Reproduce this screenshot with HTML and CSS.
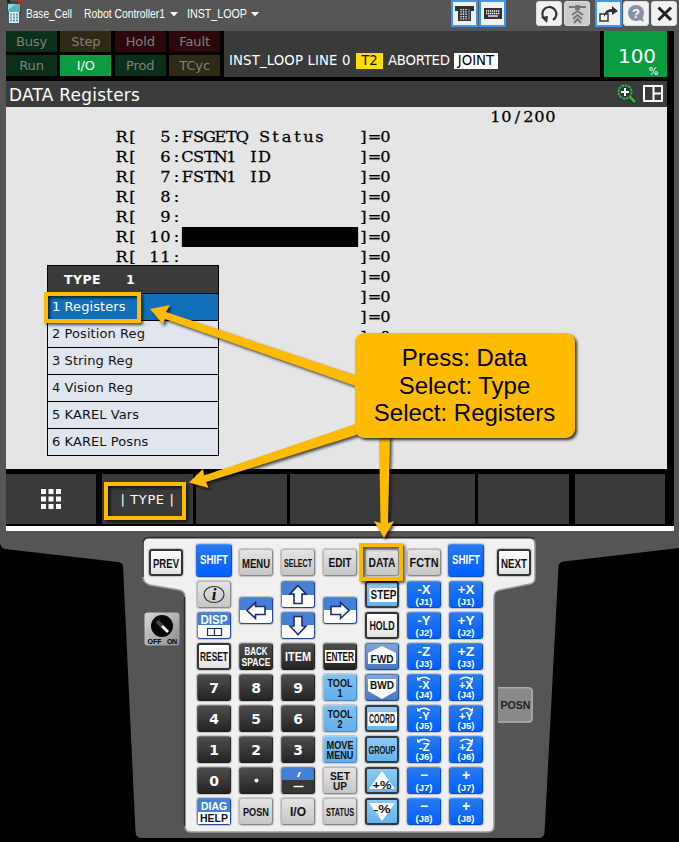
FILE: index.html
```html
<!DOCTYPE html>
<html lang="en">
<head>
<meta charset="utf-8">
<title>Base_Cell</title>
<link rel="stylesheet" href="styles.css">
</head>
<body>
<div class="pendant">
  <header class="titlebar">
    <svg class="pendant-icon" width="16" height="24" viewBox="0 0 16 24">
      <rect x="1" y="1" width="14" height="13" fill="#444"/><rect x="1" y="0" width="3" height="3" fill="#222"/><rect x="12" y="0" width="3" height="3" fill="#e02020"/>
      <rect x="2" y="4" width="12" height="8" fill="#5fb3b8"/><path d="M2 4h8l-8 6z" fill="#8fd6d8"/>
      <rect x="3" y="12" width="10" height="11" fill="#e8edf0"/>
      <path d="M4 14.500h8M4 17.500h8M4 20.500h8" stroke="#4c9fc4" stroke-width="2" stroke-dasharray="2 1"/>
    </svg>
    <svg class="crumbs" width="240" height="24">
      <text x="0" y="16" textLength="46" lengthAdjust="spacingAndGlyphs">Base_Cell</text>
      <text x="58" y="16" textLength="81" lengthAdjust="spacingAndGlyphs">Robot Controller1</text>
      <path d="M144 10h8l-4 4.500z"/>
      <text x="161" y="16" textLength="60" lengthAdjust="spacingAndGlyphs">INST_LOOP</text>
      <path d="M225 10h8l-4 4.500z"/>
    </svg>
    <div class="tools">
      <span class="tool on"><svg width="23" height="23" viewBox="0 0 23 23"><path d="M2 4h19v5h-3v10H5V9H2z" fill="#333"/><path d="M8 7v11M10.500 7v11M13 7v11" stroke="#fff" stroke-width="1.300" stroke-dasharray="1.300 1"/><path d="M16 7v11" stroke="#4a6a9c" stroke-width="2"/></svg></span>
      <span class="tool on"><svg width="23" height="23" viewBox="0 0 23 23"><rect x="3" y="6" width="18" height="11" fill="#333"/><path d="M5 9h14M5 11.500h14" stroke="#fff" stroke-width="1.300" stroke-dasharray="1.300 .7"/><path d="M7 14h10" stroke="#fff" stroke-width="1.300"/></svg></span>
      <span class="tool gap-refresh"><svg width="23" height="23" viewBox="0 0 23 23"><path d="M6 16.500A7 7 0 1 1 15 18" fill="none" stroke="#333" stroke-width="2.200"/><path d="M3 15l7-1-1 7z" fill="#333"/></svg></span>
      <span class="tool dim"><svg width="23" height="23" viewBox="0 0 23 23"><path d="M3 5h17" stroke="#777" stroke-width="2"/><rect x="9" y="3" width="5" height="5" rx="1" fill="#777"/><path d="M6 13l5.500-4 5.500 4M7 17l4.500-4 4.500 4M8 21l3.500-4 3.500 4" fill="none" stroke="#777" stroke-width="2"/></svg></span>
      <span class="tool on gap-open"><svg width="23" height="23" viewBox="0 0 23 23"><rect x="3" y="12" width="8" height="7" fill="#fff" stroke="#333" stroke-width="1.500"/><path d="M7 15c0-6 4-8 8-8V4l6 5-6 4v-3c-4 0-5 1-8 5z" fill="#333"/></svg></span>
      <span class="tool"><svg width="23" height="23" viewBox="0 0 23 23"><circle cx="11" cy="11" r="8" fill="#8791a3"/><path d="M13 17l6 3-2-7z" fill="#8791a3"/><text x="11" y="16" class="qmark">?</text></svg></span>
      <span class="tool"><svg width="23" height="23" viewBox="0 0 23 23"><path d="M5.500 5.500l12.500 12.500M18 5.500L5.500 18" stroke="#222" stroke-width="3"/></svg></span>
    </div>
  </header>

  <main class="screen">
    <section class="status">
      <div class="lamps">
        <span class="lamp green">Busy</span><span class="lamp olive">Step</span><span class="lamp red">Hold</span><span class="lamp red">Fault</span>
        <span class="lamp green">Run</span><span class="lamp lit">I/O</span><span class="lamp green">Prod</span><span class="lamp olive">TCyc</span>
      </div>
      <div class="state"><span class="prog">INST_LOOP LINE 0</span><span class="mode">T2</span><span class="aborted">ABORTED</span><span class="frame">JOINT</span></div>
      <div class="speed"><span class="pct">100</span><span class="unit">%</span></div>
    </section>
    <h1 class="heading"><span>DATA Registers</span>
      <svg width="50" height="24" viewBox="0 0 50 24"><path d="M14 14l5 5" stroke="#111" stroke-width="5"/><path d="M14 14l5 5" stroke="#28b345" stroke-width="3.200"/><circle cx="9" cy="9" r="6.500" fill="#333" stroke="#28b345" stroke-width="2" stroke-dasharray="2.500 .8"/><path d="M9 5v8M5 9h8" stroke="#fff" stroke-width="2"/><path d="M28 3h18v15H28zM37.500 3v15M37.500 10.500h8.500" fill="none" stroke="#fff" stroke-width="2"/></svg>
    </h1>
    <section class="registers" id="registers"></section>
    <ul class="type-menu">
      <li class="type-head"><span>TYPE</span><span>1</span></li>
      <li class="selected">1 Registers</li>
      <li>2 Position Reg</li>
      <li>3 String Reg</li>
      <li>4 Vision Reg</li>
      <li>5 KAREL Vars</li>
      <li>6 KAREL Posns</li>
    </ul>
    <nav class="softkeys">
      <span><svg width="20" height="20" viewBox="0 0 20 20"><path d="M0 2.500h20M0 10h20M0 17.500h20" stroke="#fff" stroke-width="5" stroke-dasharray="5 2.500"/></svg></span>
      <span class="type-key">| TYPE |</span><span></span><span></span><span></span><span></span><span></span>
    </nav>
  </main>

  <section class="keypad">
    <svg class="shell" width="679" height="311" viewBox="0 531 679 311">
      <defs>
        <linearGradient id="plate" x1="0" y1="0" x2="1" y2="1"><stop offset="0" stop-color="#d8d8d8"/><stop offset="1" stop-color="#8c8c8c"/></linearGradient>
      </defs>
      <path d="M0 531H679V548L564 561.500Q559 562 558.500 566L544.500 833Q544 838 538 838H142Q136 838 135.500 832L123 566Q122.500 562.500 118 562L5 549Q1 548 0 543Z" fill="#555"/>
      <path d="M149 538H529Q535 538 535 544V578Q535 583 530 584L500 590Q494 591 494 597V826Q494 832 488 832H191Q185 832 185 826V597Q185 591 179 590L150 585Q143 583 143 577V544Q143 538 149 538Z" fill="#f0f0f0" stroke="#999" stroke-width="1.500"/>
      <path d="M143 577V544Q143 537.500 149 537.500H529Q532 537.500 534 539M184.500 826V597" fill="none" stroke="#2c2c2c" stroke-width="1.300"/>
    </svg>
    <div class="top-row" id="topRow"></div>
    <div class="lower">
      <div class="switch">
        <svg width="36" height="34" viewBox="0 0 36 34"><rect x=".5" y=".5" width="35" height="33" rx="3" fill="url(#plate)"/><circle cx="18" cy="14" r="11" fill="#080808"/><path d="M13 9l5 5" stroke="#444" stroke-width="4"/><path d="M18 14l6 6" stroke="#fff" stroke-width="2.800"/><text x="10.500" y="32" class="sw" textLength="14">OFF</text><text x="28" y="32" class="sw" textLength="10">ON</text></svg>
      </div>
      <div class="keys" id="keys"></div>
      <div class="side-posn"><svg width="35" height="36" viewBox="0 0 35 36"><path d="M0 0H31Q35 0 35 4V32Q35 36 31 36H0Z" fill="#898989"/><path d="M0 .8H30Q34 .8 34 5V31Q34 35 30 35H0" fill="none" stroke="#bbb" stroke-width="1"/><text x="17.500" y="21.500" class="label" font-size="11.500" textLength="30" lengthAdjust="spacingAndGlyphs" fill="#222">POSN</text></svg></div>
    </div>
  </section>

  <svg class="marks" width="679" height="842" viewBox="0 0 679 842">
    <g class="shadowed" fill="#fb0">
      <path d="M150 309L170 305L166 312L358 376V387L165 319L163 324.500Z"/>
      <path d="M189 482.500L203 469L204 475.500L358 423V434.500L206 482L208.500 488Z"/>
      <path d="M384 538L374 521L380.500 523L379 436H390L388 523L394 521Z"/>
    </g>
    <g class="shadowed" fill="none" stroke="#fb0" stroke-width="4">
      <rect x="46" y="294" width="93" height="27"/>
      <rect x="106" y="484" width="78" height="34"/>
      <rect x="361" y="545" width="40" height="34"/>
    </g>
  </svg>
  <aside class="callout">Press: Data<br>Select: Type<br>Select: Registers</aside>
</div>
<script src="script.js"></script>
</body>
</html>
```
FILE: styles.css
```css
* { box-sizing: border-box; }
body { margin: 0; background: #000; font-family: "DejaVu Sans", sans-serif; }
.pendant { position: relative; width: 679px; height: 842px; overflow: hidden; background: #000; }

.titlebar { display: flex; height: 31px; background: #555; padding-left: 6px; }
.pendant-icon { margin-top: 0; }
.crumbs { margin: 2px 0 0 4px; fill: #fff; font: 12px "Liberation Sans", sans-serif; }
.tools { display: flex; margin-left: auto; padding: 0 1px 0 0; }
.tool { display: flex; justify-content: center; align-items: center; width: 26px; height: 25px; margin: 1px 1px 0; border-radius: 3px; background: #f1f1f1; border: 1px solid #ddd; }
.tool.on { width: 27px; height: 27px; margin: 0 0 0 1px; border: 2px solid #3c96f5; border-radius: 0; }
.tool.dim { background: #ccc; }
.tool.gap-refresh { margin-left: 30px; }
.tool.gap-open { margin-left: 4px; }
.qmark { font: bold 13px "Liberation Sans", sans-serif; fill: #fff; text-anchor: middle; }

.screen { position: relative; height: 500px; background: #000; border: solid #555; border-width: 0 5px 0 6px; }
.status { display: flex; height: 46px; }
.lamps { display: grid; grid-template-columns: repeat(4, 51px); column-gap: 3.4px; row-gap: 3px; grid-template-rows: 21px 21px; width: 218px; }
.lamp { text-align: center; font-size: 13px; line-height: 21px; letter-spacing: -.1px; color: #808080; }
.green { background: #0b2f19; }
.olive { background: #2f2a15; }
.red { background: #2d080b; }
.lit { background: #0b9c42; color: #fff; }
.state { display: flex; align-items: center; width: 376px; padding: 13px 0 0 5px; background: #3a3a3a; color: #fff; font-size: 13.3px; white-space: nowrap; }
.prog { width: 122px; letter-spacing: .12px; }
.mode { background: #ffdf00; color: #111; width: 27px; text-align: center; margin-left: 5px; line-height: 16px; }
.aborted { width: 61px; margin-left: 5px; letter-spacing: -.25px; }
.frame { background: #fff; color: #000; width: 44px; text-align: center; margin-left: 5px; line-height: 16px; }
.speed { display: flex; flex-direction: column; width: 63px; height: 46px; margin-left: 4px; background: #0b9c42; color: #fff; text-align: center; }
.pct { font-size: 20px; line-height: 20px; padding: 15px 0 0 3px; }
.unit { font-size: 10px; line-height: 10px; padding-left: 36px; margin-top: 1px; }
.heading { display: flex; justify-content: space-between; width: 661px; height: 26px; margin: 4px 0 0; padding: 0 3px; background: #3a3c3b; color: #fff; font-size: 16.9px; letter-spacing: .28px; font-weight: normal; line-height: 28px; }
.heading svg { margin: 2px -2px 0 0; }
.registers { width: 661px; height: 362px; background: #e5e5e5; overflow: hidden; }
.line { display: block; height: 20px; width: 661px; font: 15px "DejaVu Serif", serif; fill: #000; text-anchor: middle; stroke: #000; stroke-width: .25; }
.line text { white-space: pre; }
.type-menu { position: absolute; left: 41px; top: 234px; width: 172px; margin: 0; padding: 0; list-style: none; border: 1px solid #000; background: #e1e6ee; color: #111; font-size: 13px; }
.type-menu li { height: 27px; padding-left: 4px; line-height: 25px; border-top: 1px solid #000; letter-spacing: .08px; }
.type-menu .type-head { display: flex; gap: 25px; padding-left: 16px; border: 0; background: #3a3a3a; color: #fff; font-weight: bold; font-size: 12.5px; line-height: 28px; letter-spacing: .4px; }
.type-menu .selected { background: #116fba; color: #fff; }
.softkeys { display: grid; grid-template-columns: 93px 91px 91px 91px 91px 94px 90px; column-gap: 3px; margin-top: 5px; height: 50px; color: #fff; font-size: 13px; }
.softkeys span { display: flex; align-items: center; justify-content: center; background: #3a3a3a; }
.softkeys .type-key { letter-spacing: .6px; }
.softkeys span:first-child, .softkeys span:nth-child(6) { margin-right: 3px; }
.screen::after { content: ""; display: block; height: 5px; margin-top: 2px; background: #fff; }

.keypad { position: relative; height: 311px; }
.shell { position: absolute; left: 0; top: 0; }
.top-row { position: relative; display: flex; align-items: center; gap: 8px; padding: 17px 0 0 149px; height: 46px; }
.top-row .key:first-child { margin-right: 6px; }
.top-row .key:last-child { margin-left: 6px; }
.top-row .shift { width: 36px; height: 33px; margin: 0 -1px; transform: translateY(-2px); }
.lower { position: relative; display: flex; padding: 4px 0 0 144px; align-items: flex-start; }
.switch { width: 36px; height: 34px; margin: 31px 17px 0 0; }
.keys { display: grid; grid-template-columns: repeat(7, 34px); grid-auto-rows: 27px; gap: 4px 8px; }
.side-posn { margin: 106px 0 0 15px; }
.key { display: block; width: 34px; height: 27px; border-radius: 3px; border: 1px solid #999; box-shadow: 0 0 1px 1px #c4c4c4; }
.key svg { display: block; margin: -1px; overflow: visible; }
.key.shift svg { margin: 2px 0 0; }
.tall { grid-row: span 2; align-self: center; }
.gray { background: linear-gradient(#e4e4e4, #c6c6c6); border-color: #bbb #888 #888 #bbb; }
.white { background: linear-gradient(#fff, #e2e2e2); border: 2px solid #333; }
.white svg, .cyan svg { margin: -2px; }
.blue { background: linear-gradient(#2979ec, #0060ff); border-color: #4b8ef0 #0b4fc8 #0b4fc8 #2a6ddd; }
.dark { background: linear-gradient(#4e4e4e, #242424); border-color: #777 #222 #1b1b1b #555; }
.sky { background: linear-gradient(#81c1f0, #62aeea); border-color: #9bd0f5 #4d8cc0 #4d8cc0 #8bc5ef; }
.cyan { background: linear-gradient(#8bcaf4, #65b3ec); border: 2px solid #303a42; }
.half { background: linear-gradient(#457fd6 0 50%, #fff 50%); border-color: #5d87c8 #24478f #24478f #5d87c8; }
.comma { background: linear-gradient(#447fd7 0 50%, #393832 50%); border-color: #5d87c8 #222 #222 #5d87c8; }
.cobalt { background: linear-gradient(#7ea4de, #4878c4); border-color: #557cae #274880 #274880 #557cae; }
.key.white svg, .key.cyan svg { margin: -2px; }
.label { font-family: "Liberation Sans", sans-serif; font-weight: bold; text-anchor: middle; }
.num { font-family: "DejaVu Sans", sans-serif; }
.ital { font-family: "Liberation Serif", serif; font-style: italic; }
.sw { font: bold 7px "Liberation Sans", sans-serif; text-anchor: middle; }

.marks { position: absolute; left: 0; top: 0; }
.shadowed { filter: drop-shadow(2px 2px 1.500px rgba(0, 0, 0, .7)); }
.callout { position: absolute; left: 355px; top: 333px; width: 220px; height: 105px; padding: 11px 1px 0 0; border-radius: 9px; background: #fb0; color: #000; box-shadow: 2px 2px 3px rgba(0, 0, 0, .8); font: 24px/27.5px "Liberation Sans", sans-serif; text-align: center; }
```
FILE: script.js
```js
// Register listing: every character sits on an 11px cell, glyphs widened slightly
const names = { 5: "FSGETQ Status", 6: "CSTN1 ID", 7: "FSTN1 ID" };
const STRETCH = 1.08;
function cells(text, left) {
  const xs = [...text].map((c, i) => ((left + 5.5 + i * 11) / STRETCH).toFixed(2)).join(" ");
  return `<text transform="scale(${STRETCH} 1)" x="${xs}" y="15">${text}</text>`;
}
const line = body => `<svg class="line">${body}</svg>`;
let rows = line(cells("10/200", 484));
for (let n = 5; n <= 15; n++) {
  const value = cells("]=0", 352);
  // From 12 on the left part lies behind the TYPE menu
  const label = n < 12 ? cells("R[" + String(n).padStart(3) + ":" + (names[n] || ""), 110) : "";
  rows += line((n === 10 ? '<rect x="176" y="0" width="176" height="20"/>' : "") + label + value);
}
document.getElementById("registers").innerHTML = rows;

// Keypad
const t = (s, w, y, size, fill = "#111", cls = "", x = 17) =>
  `<text class="label ${cls}" x="${x}" y="${y}" font-size="${size}" fill="${fill}"${w ? ` textLength="${w}" lengthAdjust="spacingAndGlyphs"` : ""}>${s}</text>`;
const key = (cls, body, h = 27) => `<div class="key ${cls}"><svg width="34" height="${h}" viewBox="0 0 34 ${h}">${body}</svg></div>`;
const W = "#fff";
const shift = key("blue shift", t("SHIFT", 28, 17, 12.5, W));
const num = n => key("dark", t(n, 0, 18.5, 14, W, "num"));
const jog = (a, j) => key("blue", (a.length > 1 ? t(a, a[0] === "+" ? 17 : 13, 13, 13.5, W) : t(a, 0, 12.5, 14, W)) + t(`(${j})`, 17, 23.5, 9.8, W));
const rot = (a, j, left) => key("blue", `<path d="M11 5.500Q17 1 23 5.500" fill="none" stroke="#fff" stroke-width="1.500"/><path d="${left ? "M10 2.500v4h4z" : "M24 2.500v4h-4z"}" fill="#fff"/>` + t(a, left ? 11 : 14, 15, 11, W) + t(`(${j})`, 17, 23.8, 9.5, W));
const two = (cls, a, wa, b, wb) => key(cls, t(a, wa, 12.5, 10.8) + t(b, wb, 23, 10.8));
const arrow = (deg, tall) => key("half" + (tall ? " tall" : ""), `<path transform="rotate(${deg} 17 13.500)" d="M17 4.500L25 13H21V22.500H13V13H9Z" fill="#fff" stroke="#1b2d6b" stroke-width="1.600"/>`);

document.getElementById("topRow").innerHTML = [
  key("white", t("PREV", 26, 18.5, 12.5)), shift,
  key("gray", t("MENU", 28, 18.5, 12.5)), key("gray", t("SELECT", 28, 17.5, 11.5)),
  key("gray", t("EDIT", 23, 17.5, 12)), key("gray", t("DATA", 27, 17.5, 12)),
  key("gray", t("FCTN", 29, 17.5, 12.5)), shift, key("white", t("NEXT", 26, 18.5, 12.5))
].join("");

document.getElementById("keys").innerHTML = [
  key("gray", '<ellipse cx="17" cy="13.500" rx="10" ry="8" fill="none" stroke="#333" stroke-width="1.200"/>' + t("i", 0, 19, 17, "#111", "ital")),
  arrow(-90, true), arrow(0), arrow(90, true),
  key("cyan", '<rect x="4.500" y="7" width="27.500" height="14" fill="#fff"/>' + t("STEP", 26, 18.300, 12.5, "#111", "", 18.5)),
  jog("-X", "J1"), jog("+X", "J1"),

  key("half", t("DISP", 27, 11.5, 12, W) + '<path d="M10.500 16.500h14v7h-14zM17.500 16.500v7" fill="none" stroke="#1b2d6b" stroke-width="1.200"/>'),
  arrow(180),
  key("white", t("HOLD", 25, 17.5, 12)), jog("-Y", "J2"), jog("+Y", "J2"),

  key("white", t("RESET", 28, 18, 12.5)),
  key("dark", t("BACK", 23, 12.3, 11, W) + t("SPACE", 29, 23, 11, W)),
  key("dark", t("ITEM", 26, 18, 12.5, W)),
  key("dark", '<rect x="2" y="7" width="30" height="13" fill="#fff"/>' + t("ENTER", 28, 18, 12)),
  key("cobalt", '<path d="M3 10L17 3L31 10V21H3Z" fill="#fff"/>' + t("FWD", 23, 19.5, 10.5)),
  jog("-Z", "J3"), jog("+Z", "J3"),

  num(7), num(8), num(9), two("sky", "TOOL", 25, "1", 5),
  key("cobalt", '<path d="M3 5H31V17L17 25L3 17Z" fill="#fff"/>' + t("BWD", 24, 15, 11)),
  rot("-X", "J4", true), rot("+X", "J4"),

  num(4), num(5), num(6), two("sky", "TOOL", 25, "2", 5),
  key("cyan", '<rect x="3" y="7" width="29" height="14" fill="#fff"/>' + t("COORD", 26, 18, 12)),
  rot("-Y", "J5", true), rot("+Y", "J5"),

  num(1), num(2), num(3), two("sky", "MOVE", 27, "MENU", 27),
  key("cyan", t("GROUP", 27, 17.5, 11.5)),
  rot("-Z", "J6", true), rot("+Z", "J6"),

  num(0), key("dark", '<circle cx="17.500" cy="13.500" r="2" fill="#fff"/>'),
  key("comma", '<path d="M18 5h2l-2 5h-2z" fill="#fff"/><path d="M12.500 19.500h10" stroke="#fff" stroke-width="1.500"/>'),
  two("gray", "SET", 20, "UP", 14),
  key("cyan", '<path d="M17 4L30 22H4Z" fill="#fff"/>' + t("+%", 19, 21.5, 11)),
  jog("−", "J7"), jog("+", "J7"),

  key("half help", '<rect x="1" y="14" width="32" height="12" fill="#fff"/>' + t("DIAG", 26, 11.5, 11.5, W) + t("HELP", 28, 24, 11.5)),
  key("gray", t("POSN", 26, 18, 11.5)), key("gray", t("I/O", 16, 18, 12)),
  key("gray", t("STATUS", 28, 17.5, 11)),
  key("cyan", '<path d="M4 5H30L17 23Z" fill="#fff"/>' + t("-%", 17, 14.5, 11)),
  jog("−", "J8"), jog("+", "J8")
].join("");
```
